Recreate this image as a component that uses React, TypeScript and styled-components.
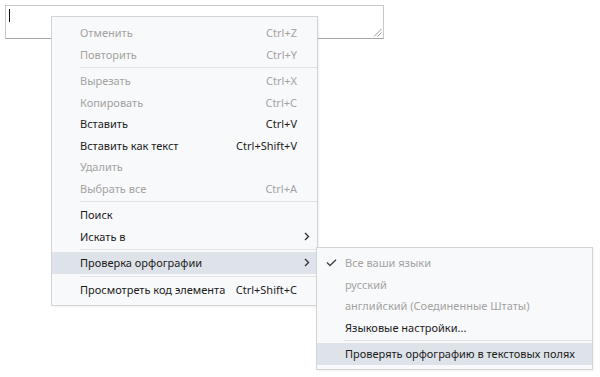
import React from "react";
import styled, { createGlobalStyle } from "styled-components";

const Global = createGlobalStyle`
  html, body { margin: 0; padding: 0; background: #ffffff; }
  body {
    width: 600px;
    height: 377px;
    overflow: hidden;
    font-family: "Noto Sans", "Open Sans", sans-serif;
    font-size: 11px;
  }
`;

const Page = styled.div`
  position: relative;
  width: 600px;
  height: 377px;
  padding: 5px 0 0 5px;
  box-sizing: border-box;
`;

const FieldBox = styled.div`
  position: relative;
  width: 379px;
  height: 34px;
  box-sizing: border-box;
  border: 1px solid #c9c9c9;
  border-bottom-color: #a8a8a8;
  background: #fff;
`;

const Caret = styled.span`
  position: absolute;
  left: 3px;
  top: 3px;
  width: 1px;
  height: 13px;
  background: #111;
`;

const Grip = styled.svg`
  position: absolute;
  right: 1px;
  bottom: 1px;
`;

const Menu = styled.div<{ $left: number; $top: number; $width: number; $pad: number }>`
  position: absolute;
  left: ${(p) => p.$left}px;
  top: ${(p) => p.$top}px;
  width: ${(p) => p.$width}px;
  box-sizing: border-box;
  padding: ${(p) => p.$pad}px 0 ${(p) => p.$pad}px 0;
  background: #f8f9fa;
  border: 1px solid #d2d4d6;
  box-shadow: 1px 1px 2px rgba(0, 0, 0, 0.06);
  display: flex;
  flex-direction: column;
`;

const Row = styled.div<{ $active?: boolean; $disabled?: boolean; $indent: number }>`
  height: 21.5px;
  display: flex;
  align-items: center;
  padding-left: ${(p) => p.$indent}px;
  padding-right: 6px;
  background: ${(p) => (p.$active ? "#dee3e9" : "transparent")};
  color: ${(p) => (p.$disabled ? "#a3a3a3" : "#1b1b1b")};
  white-space: nowrap;
`;

const Label = styled.span`
  flex: 1;
`;

const Shortcut = styled.span`
  margin-right: 14px;
`;

const ArrowSlot = styled.span`
  width: 8px;
  display: flex;
  justify-content: center;
`;

const CheckSlot = styled.span`
  position: absolute;
  left: 9px;
  display: flex;
`;

const Sep = styled.div<{ $indent: number }>`
  height: 1px;
  margin: 2px 0 2px ${(p) => p.$indent}px;
  background: #e1e3e5;
`;

const SubRow = styled(Row)`
  position: relative;
`;

const Chevron = () => (
  <svg width="6" height="9" viewBox="0 0 6 9">
    <polyline points="1,1 4.5,4.5 1,8" fill="none" stroke="#333" strokeWidth="1.4" />
  </svg>
);

const Check = () => (
  <svg width="11" height="8" viewBox="0 0 11 8">
    <polyline points="1,3.5 4,6.5 10,0.8" fill="none" stroke="#444" strokeWidth="1.4" />
  </svg>
);

type Entry = {
  sep?: boolean;
  label?: string;
  shortcut?: string;
  disabled?: boolean;
  arrow?: boolean;
  active?: boolean;
  checked?: boolean;
};

const mainItems: Entry[] = [
  { label: "Отменить", shortcut: "Ctrl+Z", disabled: true },
  { label: "Повторить", shortcut: "Ctrl+Y", disabled: true },
  { sep: true },
  { label: "Вырезать", shortcut: "Ctrl+X", disabled: true },
  { label: "Копировать", shortcut: "Ctrl+C", disabled: true },
  { label: "Вставить", shortcut: "Ctrl+V" },
  { label: "Вставить как текст", shortcut: "Ctrl+Shift+V" },
  { label: "Удалить", disabled: true },
  { label: "Выбрать все", shortcut: "Ctrl+A", disabled: true },
  { sep: true },
  { label: "Поиск" },
  { label: "Искать в", arrow: true },
  { sep: true },
  { label: "Проверка орфографии", arrow: true, active: true },
  { sep: true },
  { label: "Просмотреть код элемента", shortcut: "Ctrl+Shift+C" },
];

const subItems: Entry[] = [
  { label: "Все ваши языки", disabled: true, checked: true },
  { label: "русский", disabled: true },
  { label: "английский (Соединенные Штаты)", disabled: true },
  { label: "Языковые настройки..." },
  { sep: true },
  { label: "Проверять орфографию в текстовых полях", active: true },
];

export default function App() {
  return (
    <Page>
      <Global />
      <FieldBox>
        <Caret />
        <Grip width="9" height="9" viewBox="0 0 9 9">
          <line x1="8.5" y1="1" x2="1" y2="8.5" stroke="#9a9a9a" strokeWidth="1" />
          <line x1="8.5" y1="4.5" x2="4.5" y2="8.5" stroke="#9a9a9a" strokeWidth="1" />
        </Grip>
      </FieldBox>

      <Menu $left={51} $top={16} $width={267} $pad={5}>
        {mainItems.map((it, i) =>
          it.sep ? (
            <Sep key={i} $indent={28} />
          ) : (
            <Row key={i} $indent={28} $active={it.active} $disabled={it.disabled}>
              <Label>{it.label}</Label>
              {it.shortcut && <Shortcut>{it.shortcut}</Shortcut>}
              {it.arrow && (
                <ArrowSlot>
                  <Chevron />
                </ArrowSlot>
              )}
            </Row>
          )
        )}
      </Menu>

      <Menu $left={316} $top={247} $width={277} $pad={4}>
        {subItems.map((it, i) =>
          it.sep ? (
            <Sep key={i} $indent={27} />
          ) : (
            <SubRow key={i} $indent={28} $active={it.active} $disabled={it.disabled}>
              {it.checked && (
                <CheckSlot>
                  <Check />
                </CheckSlot>
              )}
              <Label>{it.label}</Label>
            </SubRow>
          )
        )}
      </Menu>
    </Page>
  );
}
